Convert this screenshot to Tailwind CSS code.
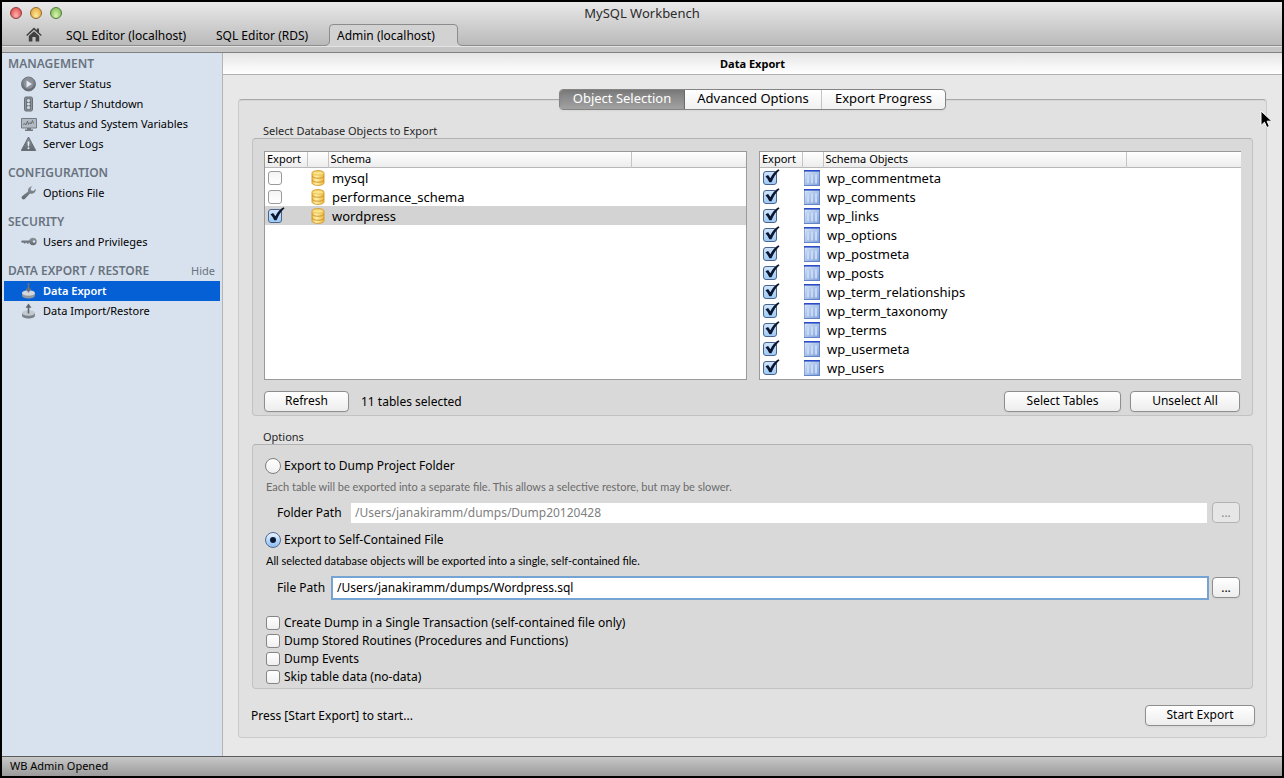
<!DOCTYPE html>
<html lang="en">
<head>
<meta charset="utf-8">
<title>MySQL Workbench</title>
<script src="https://cdn.jsdelivr.net/npm/@tailwindcss/browser@4"></script>
</head>
<body class="min-h-screen flex flex-col bg-black p-[2px] font-['Noto_Sans',sans-serif] text-xs text-black">

<svg class="absolute size-0" aria-hidden="true">
  <defs>
    <linearGradient id="gold" x1="0" x2="1" y1="0" y2="0"><stop offset="0" stop-color="#efbd45"/><stop offset=".35" stop-color="#fff2ae"/><stop offset="1" stop-color="#ecb53a"/></linearGradient>
    <linearGradient id="tbl" x1="0" x2="1" y1="0" y2="1"><stop offset="0" stop-color="#dbe8f8"/><stop offset="1" stop-color="#7d9fda"/></linearGradient>
    <linearGradient id="steel" x1="0" x2="0" y1="0" y2="1"><stop offset="0" stop-color="#8d939a"/><stop offset="1" stop-color="#62686f"/></linearGradient>
  </defs>
  <symbol id="i-db" viewBox="0 0 14 16">
    <path d="M1 3.2C1 1.6 3.6.6 7 .6s6 1 6 2.600v9.600c0 1.600-2.600 2.600-6 2.600s-6-1-6-2.600z" fill="url(#gold)" stroke="#d0962a" stroke-width=".9"/>
    <ellipse cx="7" cy="3.200" rx="5.400" ry="2" fill="#fbe388" stroke="#e0b040" stroke-width=".6"/>
    <path d="M1.200 6.200c1 1.600 3 2 5.800 2s4.800-.4 5.800-2M1.200 10.200c1 1.600 3 2 5.800 2s4.800-.4 5.800-2" fill="none" stroke="#c98f22" stroke-width=".9"/>
  </symbol>
  <symbol id="i-table" viewBox="0 0 16 16">
    <path d="M.5.5h15v15H.5z" fill="url(#tbl)" stroke="#8aa8dc"/>
    <path d="M0 0h16v1.600H0z" fill="#2a4bc4"/>
    <path d="M3 4h2v9.500H3zM7 4h2v9.500H7zM11 4h2v9.500h-2z" fill="#d3e2f7" stroke="#a3bde8" stroke-width=".5"/>
    <path d="M0 15.500h16M15.500 2v14" stroke="#6385c8"/>
  </symbol>
  <symbol id="i-check" viewBox="0 0 15 15">
    <path d="M2.200 6.400 4.500 5.200 6.500 8.200C8.200 4.700 10.400 2 13.600.2L14.600 1.100C11.500 4 9.400 7.300 7.500 11.700L5.600 11.800C4.700 9.700 3.600 8 2.200 6.400Z" fill="#0b1730"/>
  </symbol>
</svg>

<!-- Title bar and document tabs -->
<header class="bg-linear-to-b from-[#e9e9e9] to-[#b2b2b2] border-b border-[#808080]">
  <div class="relative flex h-[22px] items-center px-2">
    <div class="absolute flex gap-2">
      <button aria-label="Close" class="size-3 rounded-full border border-[#8f3a3a] bg-radial-[at_50%_75%] from-[#ffb5b0] to-[#d8373a]"></button>
      <button aria-label="Minimize" class="size-3 rounded-full border border-[#94692a] bg-radial-[at_50%_75%] from-[#ffeb9c] to-[#e09a2c]"></button>
      <button aria-label="Zoom" class="size-3 rounded-full border border-[#4f7c3c] bg-radial-[at_50%_75%] from-[#dcf8ac] to-[#6cae4c]"></button>
    </div>
    <h1 class="w-full text-center text-[13px] leading-5 text-[#2b2b2b]">MySQL Workbench</h1>
  </div>
  <nav class="flex h-[22px] items-center border-b border-[#8c8c8c] pl-6" aria-label="Documents">
    <a href="#" aria-label="Home" class="mr-6 flex w-4 items-center">
      <svg class="h-[15px] w-4" viewBox="0 0 16 15" fill="#404040"><path d="M8 .6 10.800 3.300V1.500h2.200v3.900L15.800 8l-1 1L8 2.700 1.200 9l-1-1z"/><path d="M8 4.200 13.200 9v5.500H9.600V10H6.400v4.500H2.800V9z"/></svg>
    </a>
    <a href="#" class="w-[150px] pt-[2px]">SQL Editor (localhost)</a>
    <a href="#" class="w-[108px] pt-[2px]">SQL Editor (RDS)</a>
    <a href="#" class="-mb-px flex h-[22px] items-center self-end">
      <svg class="h-[22px] w-[10px]" viewBox="0 0 10 22"><path d="M10 .5H9Q5.500.5 5.500 4v13Q5.500 21.500 0 21.500V22H10z" fill="#d2d2d2"/><path d="M10 .5H9Q5.500.5 5.500 4v13Q5.500 21.500 0 21.500" fill="none" stroke="#8c8c8c"/></svg>
      <span class="flex h-[22px] w-[119px] items-center border-t border-[#8c8c8c] bg-[#d2d2d2] pt-px pl-[3px]">Admin (localhost)</span>
      <svg class="h-[22px] w-[10px]" viewBox="0 0 10 22"><path d="M0 .5h1Q4.500.5 4.500 4v13Q4.500 21.500 10 21.500V22H0z" fill="#d2d2d2"/><path d="M0 .5h1Q4.500.5 4.500 4v13Q4.500 21.500 10 21.500" fill="none" stroke="#8c8c8c"/></svg>
    </a>
  </nav>
  <div class="h-[6px] border-t border-[#e4e4e4] bg-[#c6c6c6]"></div>
</header>

<div class="flex flex-1">
  <!-- Task sidebar -->
  <aside class="flex w-[221px] shrink-0 flex-col gap-[9px] border-r border-[#b4b4b4] bg-[#d8e2ee] px-[2px] pt-px text-[11px] leading-5">
    <section>
      <h2 class="pl-1 text-xs leading-5 font-semibold text-[#69737f]">MANAGEMENT</h2>
      <a href="#" class="flex h-5 items-center gap-[6px] pl-[17px]">
        <svg class="size-4" viewBox="0 0 16 16"><circle cx="7.500" cy="8" r="7" fill="url(#steel)" stroke="#5f666e" stroke-width=".8"/><circle cx="7.500" cy="8" r="4.800" fill="#8b929a"/><path d="M5.500 4.500 11 8l-5.500 3.500z" fill="#e6ebf1"/></svg>Server Status</a>
      <a href="#" class="flex h-5 items-center gap-[6px] pl-[17px]">
        <svg class="size-4" viewBox="0 0 16 16"><rect x="3.500" y="1" width="8" height="14" rx="1.500" fill="#8b9199" stroke="#666d75"/><rect x="5" y="2.500" width="5" height="11" fill="#6c737b"/><circle cx="7.500" cy="4.500" r="1.600" fill="#d5dbe2"/><circle cx="7.500" cy="8" r="1.600" fill="#d5dbe2"/><circle cx="7.500" cy="11.500" r="1.600" fill="#d5dbe2"/></svg>Startup / Shutdown</a>
      <a href="#" class="flex h-5 items-center gap-[6px] pl-[17px]">
        <svg class="size-4" viewBox="0 0 16 16"><path d="M.5 2.500h15V12H.5z" fill="#b3bac2" stroke="#747b83"/><path d="M6 12h4v1.500h2V15H4v-1.500h2z" fill="#70777f"/><path d="M2 8.500l2-1 1 1.500 1.500-4 1 3.500 1.500-2 1 1.500 1.500-3.500 1 3" fill="none" stroke="#5a6169" stroke-width=".8"/></svg>Status and System Variables</a>
      <a href="#" class="flex h-5 items-center gap-[6px] pl-[17px]">
        <svg class="size-4" viewBox="0 0 16 16"><path d="M7.500 1 14.700 14.500H.300z" fill="url(#steel)" stroke="#676e76" stroke-linejoin="round"/><path d="M6.500 5.500h2l-.4 5H6.900z" fill="#e6ebf1"/><circle cx="7.500" cy="12.300" r="1" fill="#e6ebf1"/></svg>Server Logs</a>
    </section>
    <section>
      <h2 class="pl-1 text-xs leading-5 font-semibold text-[#69737f]">CONFIGURATION</h2>
      <a href="#" class="flex h-5 items-center gap-[6px] pl-[17px]">
        <svg class="size-4" viewBox="0 0 16 16"><path d="M11.500 1.200a4.200 4.200 0 0 0-4.300 5.400L1.300 11a1.900 1.900 0 0 0 2.700 2.800l5-5.300a4.200 4.200 0 0 0 5.700-4.700L12.300 6l-2.200-.6-.4-2.100z" fill="url(#steel)"/></svg>Options File</a>
    </section>
    <section>
      <h2 class="pl-1 text-xs leading-5 font-semibold text-[#69737f]">SECURITY</h2>
      <a href="#" class="flex h-5 items-center gap-[6px] pl-[17px]">
        <svg class="size-4" viewBox="0 0 16 16"><circle cx="12" cy="7.500" r="3.700" fill="url(#steel)"/><circle cx="13" cy="7.500" r="1.200" fill="#d8e2ee"/><path d="M0 7.500 1 6.500h8v2.200H7.500v1H6v-1H4.500v.8H3v-.8H1z" fill="#70777f"/></svg>Users and Privileges</a>
    </section>
    <section>
      <div class="flex justify-between pr-[5px] pl-1 text-[#69737f]"><h2 class="text-xs leading-5 font-semibold">DATA EXPORT / RESTORE</h2><a href="#">Hide</a></div>
      <a href="#" aria-current="page" class="flex h-5 items-center gap-[6px] bg-[#0560d6] pl-[17px] font-semibold text-white">
        <svg class="size-4" viewBox="0 0 16 16"><path d="M1 10v2.500C1 14.300 4 15.500 7.500 15.500S14 14.300 14 12.500V10z" fill="#8f969d"/><ellipse cx="7.500" cy="10" rx="6.500" ry="2.800" fill="#d3d7db"/><path d="M6.700 0h1.600v5.500h2.200L7.500 9.800l-3-4.300h2.200z" fill="#6b7076"/></svg>Data Export</a>
      <a href="#" class="flex h-5 items-center gap-[6px] pl-[17px]">
        <svg class="size-4" viewBox="0 0 16 16"><path d="M1 10v2.500C1 14.300 4 15.500 7.500 15.500S14 14.300 14 12.500V10z" fill="#7b828a"/><ellipse cx="7.500" cy="10" rx="6.500" ry="2.800" fill="#c3c9cf"/><path d="M6.700 10.500h1.600V4.800h2.200L7.500.5l-3 4.300h2.200z" fill="#5e656d"/></svg>Data Import/Restore</a>
    </section>
  </aside>

  <!-- Data export page -->
  <main class="flex min-w-0 flex-1 flex-col bg-[#e8e8e8]">
    <h2 class="h-[22px] border-b border-[#b0b0b0] bg-linear-to-b from-[#e6e6e6] to-white text-center text-[11px] leading-[22px] font-bold">Data Export</h2>

    <div class="mx-[15px] mt-[14px] flex flex-col">
      <div class="relative z-10 flex justify-center" role="tablist">
        <div class="flex h-[21px] overflow-hidden rounded-sm border border-[#848484] bg-linear-to-b from-white to-[#f1f1f1] text-[13px] leading-[17px] shadow-xs">
          <button role="tab" aria-selected="true" class="w-[125px] border-r border-[#6a6a6a] bg-linear-to-b from-[#7c7c7c] to-[#a2a2a2] pb-[2px] text-white inset-shadow-sm">Object Selection</button>
          <button role="tab" aria-selected="false" class="w-[137px] border-r border-[#c4c4c4] pb-[2px]">Advanced Options</button>
          <button role="tab" aria-selected="false" class="w-[123px] pb-[2px]">Export Progress</button>
        </div>
      </div>

      <div class="-mt-[11px] flex flex-col rounded border border-t-[#a9a9a9] border-[#cacaca] bg-[#e1e1e1] px-[13px] pt-[23px] pb-[11px] inset-shadow-2xs">
        <section>
          <h3 class="pl-[11px] text-[11px] leading-[15px] text-[#262626]">Select Database Objects to Export</h3>
          <div class="rounded border border-t-[#b2b2b2] border-[#c2c2c2] bg-[#d9d9d9] px-[11px] pt-[12px] pb-[3px]">
            <div class="flex gap-3">
              <div class="h-[229px] flex-1 border border-[#9a9a9a] bg-white">
                <table class="w-full table-fixed border-collapse">
                  <colgroup><col class="w-[42px]"><col class="w-[21px]"><col class="w-[303px]"><col></colgroup>
                  <thead class="bg-linear-to-b from-white to-[#ececec] text-left text-[11px] leading-[14px]">
                    <tr class="h-[15px] border-b border-[#b8b8b8]">
                      <th class="border-r border-[#c4c4c4] p-0 pl-[2px] font-normal">Export</th>
                      <th class="border-r border-[#c4c4c4] p-0"></th>
                      <th class="border-r border-[#c4c4c4] p-0 pl-[2px] font-normal">Schema</th>
                      <th class="p-0"></th>
                    </tr>
                  </thead>
                  <tbody id="schemas" class="text-[13px] leading-[19px]"></tbody>
                </table>
              </div>
              <div class="h-[229px] flex-1 border border-r-0 border-[#9a9a9a] bg-white">
                <table class="w-full table-fixed border-collapse">
                  <colgroup><col class="w-[42px]"><col class="w-[21px]"><col class="w-[303px]"><col></colgroup>
                  <thead class="bg-linear-to-b from-white to-[#ececec] text-left text-[11px] leading-[14px]">
                    <tr class="h-[15px] border-b border-[#b8b8b8]">
                      <th class="border-r border-[#c4c4c4] p-0 pl-[2px] font-normal">Export</th>
                      <th class="border-r border-[#c4c4c4] p-0"></th>
                      <th class="border-r border-[#c4c4c4] p-0 pl-[2px] font-normal">Schema Objects</th>
                      <th class="p-0"></th>
                    </tr>
                  </thead>
                  <tbody id="objects" class="text-[13px] leading-[19px]"></tbody>
                </table>
              </div>
            </div>
            <div class="mt-[10px] flex items-center pr-px">
              <button class="h-[21px] w-[85px] rounded border border-[#8e8e8e] bg-linear-to-b from-white to-[#ededed] pb-[2px] leading-[17px] shadow-xs">Refresh</button>
              <span class="pt-[2px] pl-3 leading-5">11 tables selected</span>
              <button class="ml-auto h-[21px] w-[117px] rounded border border-[#8e8e8e] bg-linear-to-b from-white to-[#ededed] pb-[2px] leading-[17px] shadow-xs">Select Tables</button>
              <button class="ml-[9px] h-[21px] w-[110px] rounded border border-[#8e8e8e] bg-linear-to-b from-white to-[#ededed] pb-[2px] leading-[17px] shadow-xs">Unselect All</button>
            </div>
          </div>
        </section>

        <section class="mt-[13px]">
          <h3 class="pl-[11px] text-[11px] leading-[15px] text-[#262626]">Options</h3>
          <div class="flex flex-col rounded border border-t-[#b2b2b2] border-[#c2c2c2] bg-[#d9d9d9] px-[12px] pt-[12px] pb-[2px]">
            <label class="flex h-[18px] items-center gap-[3px]">
              <input type="radio" name="target" class="size-4 appearance-none rounded-full border border-[#7e7e7e] bg-linear-to-b from-white to-[#efefef]">Export to Dump Project Folder
            </label>
            <p class="mt-[2px] pl-px font-[Lato,sans-serif] text-[11px] leading-5 text-[#6b6b6b]">Each table will be exported into a separate file. This allows a selective restore, but may be slower.</p>
            <div class="mt-[5px] flex h-[21px] items-center pl-[12px]">
              <label for="folder" class="w-[74px]">Folder Path</label>
              <input id="folder" type="text" disabled value="/Users/janakiramm/dumps/Dump20120428" class="h-[20px] min-w-0 flex-1 bg-white px-1 text-[#808080]">
              <button disabled aria-label="Browse for folder" class="ml-[5px] h-[21px] w-[28px] rounded border border-[#b3b3b3] bg-[#e6e6e6] leading-[17px] text-[#8a8a8a]">...</button>
            </div>
            <label class="mt-[8px] flex h-[18px] items-center gap-[3px]">
              <span class="relative flex size-4">
                <input type="radio" name="target" checked class="size-4 appearance-none rounded-full border border-[#4e6a96] bg-linear-to-b from-[#e8f3ff] to-[#8dbdf0]">
                <span class="absolute inset-[5px] rounded-full bg-[#0c1a33]"></span>
              </span>Export to Self-Contained File
            </label>
            <p class="mt-[2px] pl-px font-[Lato,sans-serif] text-[11px] leading-5">All selected database objects will be exported into a single, self-contained file.</p>
            <div class="mt-[6px] flex h-[21px] items-center pl-[12px]">
              <label for="file" class="w-[56px]">File Path</label>
              <input id="file" type="text" value="/Users/janakiramm/dumps/Wordpress.sql" class="h-[20px] min-w-0 flex-1 bg-white px-1 ring-[2px] ring-[#74a3d4] outline-none">
              <button aria-label="Browse for file" class="ml-[5px] h-[21px] w-[28px] rounded border border-[#8e8e8e] bg-linear-to-b from-white to-[#ededed] leading-[17px] shadow-xs">...</button>
            </div>
            <div class="mt-[16px] flex flex-col pl-px">
              <label class="flex h-[18px] items-center gap-1"><input type="checkbox" class="size-[14px] appearance-none rounded-[3px] border border-[#858585] bg-linear-to-b from-white to-[#f0f0f0]">Create Dump in a Single Transaction (self-contained file only)</label>
              <label class="flex h-[18px] items-center gap-1"><input type="checkbox" class="size-[14px] appearance-none rounded-[3px] border border-[#858585] bg-linear-to-b from-white to-[#f0f0f0]">Dump Stored Routines (Procedures and Functions)</label>
              <label class="flex h-[18px] items-center gap-1"><input type="checkbox" class="size-[14px] appearance-none rounded-[3px] border border-[#858585] bg-linear-to-b from-white to-[#f0f0f0]">Dump Events</label>
              <label class="flex h-[18px] items-center gap-1"><input type="checkbox" class="size-[14px] appearance-none rounded-[3px] border border-[#858585] bg-linear-to-b from-white to-[#f0f0f0]">Skip table data (no-data)</label>
            </div>
          </div>
        </section>

        <div class="-mx-[2px] mt-4 flex items-center justify-between">
          <span class="pl-px leading-5">Press [Start Export] to start...</span>
          <button class="h-[21px] w-[110px] rounded border border-[#8e8e8e] bg-linear-to-b from-white to-[#ededed] pb-[2px] leading-[17px] shadow-xs">Start Export</button>
        </div>
      </div>
    </div>
  </main>
</div>

<footer class="flex h-5 items-center border-t border-[#5c5c5c] bg-linear-to-b from-[#c8c8c8] to-[#9b9b9b] pl-2 text-[11px]">WB Admin Opened</footer>

<!-- Mouse pointer -->
<svg class="pointer-events-none absolute top-[110px] left-[1260px] z-20 h-[19px] w-[13px]" viewBox="0 0 13 19" aria-hidden="true"><path d="M1 1v14.500l3.500-3.300 2.300 5.300 2.600-1.100-2.300-5.200h4.800z" fill="#000" stroke="#fff" stroke-linejoin="round"/></svg>

<script>
  const row = (id, name, checked, selected, icon) => `
    <tr class="${selected ? 'bg-[#d3d3d3]' : ''}">
      <td class="h-[19px] p-0 pt-[2px] pl-[3px]">
        <span class="relative flex size-[14px]">
          <input id="${id}" type="checkbox" ${checked ? 'checked' : ''} class="peer size-[14px] appearance-none rounded-[3px] border border-[#9a9a9a] bg-linear-to-b from-[#f4f4f4] to-white checked:border-[#4a648e] checked:from-[#cfe4fb] checked:to-[#9fcbf5]">
          <svg class="pointer-events-none absolute -top-[2px] left-0 hidden size-[17px] peer-checked:block"><use href="#i-check"/></svg>
        </span>
      </td>
      <td class="h-[19px] p-0 pt-[2px] ${icon === 'db' ? 'pl-[4px]' : 'pl-[2px]'}"><svg class="${icon === 'db' ? 'h-4 w-[14px]' : 'size-4'}"><use href="#i-${icon}"/></svg></td>
      <td class="h-[19px] p-0 pt-px pl-[4px]" colspan="2"><label for="${id}" class="block h-[18px]">${name}</label></td>
    </tr>`;
  document.getElementById('schemas').innerHTML =
    [['mysql', false], ['performance_schema', false], ['wordpress', true]]
      .map(([n, on]) => row('schema-' + n, n, on, on, 'db')).join('');
  document.getElementById('objects').innerHTML =
    ['wp_commentmeta', 'wp_comments', 'wp_links', 'wp_options', 'wp_postmeta', 'wp_posts', 'wp_term_relationships', 'wp_term_taxonomy', 'wp_terms', 'wp_usermeta', 'wp_users']
      .map(n => row('object-' + n, n, true, false, 'table')).join('');
</script>
</body>
</html>
